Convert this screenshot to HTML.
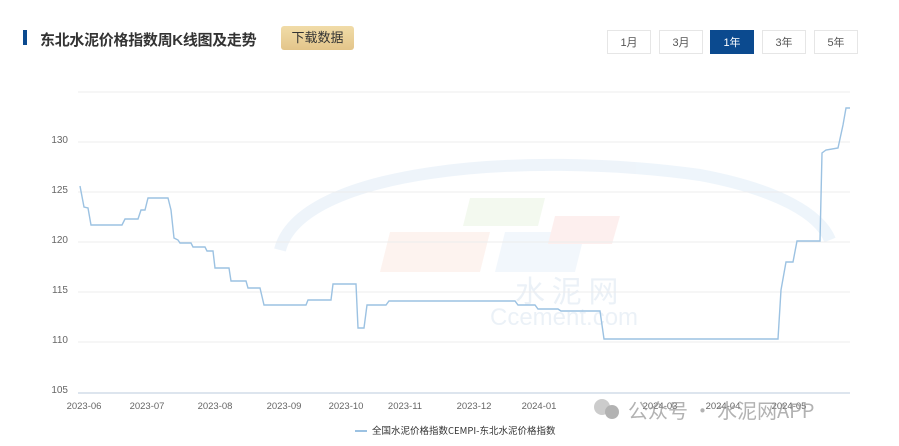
<!DOCTYPE html><html><head><meta charset="utf-8"><style>
body{margin:0;width:899px;height:446px;background:#fff;font-family:"Liberation Sans","Noto Sans CJK SC",sans-serif;position:relative;overflow:hidden}
.t{position:absolute;left:40px;top:29px;font-size:15px;font-weight:bold;color:#333;letter-spacing:-0.3px}
.bar{position:absolute;left:23px;top:30px;width:4px;height:15px;background:#0b4a8f}
.dl{position:absolute;left:281px;top:26px;width:73px;height:24px;border-radius:3px;background:linear-gradient(#f1dca8,#e3c58a);font-size:13px;color:#333;text-align:center;line-height:24px}
.b{position:absolute;top:30px;width:44px;height:24px;border:1px solid #e6e6e6;font-size:11px;color:#555;text-align:center;line-height:24px;box-sizing:border-box}
.on{background:#0b4a8f;color:#fff;border-color:#0b4a8f}
</style></head><body>
<div class="bar"></div><div class="t">东北水泥价格指数周K线图及走势</div><div class="dl">下载数据</div>
<div class="b" style="left:607px">1月</div><div class="b" style="left:659px">3月</div><div class="b on" style="left:710px">1年</div><div class="b" style="left:762px">3年</div><div class="b" style="left:814px">5年</div>
<svg width="899" height="446" style="position:absolute;left:0;top:0" font-family="Liberation Sans,sans-serif">
<g opacity="0.13">
<path d="M280,250 C300,170 520,150 700,175 C780,190 820,215 830,240" fill="none" stroke="#7fb0e0" stroke-width="12"/>
<polygon points="390,232 490,232 480,272 380,272" fill="#f4a58a"/>
<polygon points="505,232 585,232 575,272 495,272" fill="#9ec6ea"/>
<polygon points="470,198 545,198 538,226 463,226" fill="#a6d38c"/>
<polygon points="555,216 620,216 612,244 548,244" fill="#f08a86"/>
<text x="515" y="302" font-size="30" fill="#6f9cc8" font-family="Noto Sans CJK SC">水 泥 网</text>
<text x="490" y="325" font-size="24" fill="#6f9cc8">Ccement.com</text>
</g>
<g stroke="#ececec" stroke-width="1">
<line x1="78" y1="92" x2="850" y2="92"/><line x1="78" y1="142" x2="850" y2="142"/><line x1="78" y1="192" x2="850" y2="192"/><line x1="78" y1="242" x2="850" y2="242"/><line x1="78" y1="292" x2="850" y2="292"/><line x1="78" y1="342" x2="850" y2="342"/>
</g>
<line x1="78" y1="393" x2="850" y2="393" stroke="#dde5ee" stroke-width="2"/>
<g font-size="10" fill="#666" text-anchor="end">
<text x="68" y="143">130</text><text x="68" y="193">125</text><text x="68" y="243">120</text><text x="68" y="293">115</text><text x="68" y="343">110</text><text x="68" y="393">105</text></g>
<g font-size="9.5" fill="#666" text-anchor="middle">
<text x="84" y="409">2023-06</text><text x="147" y="409">2023-07</text><text x="215" y="409">2023-08</text><text x="284" y="409">2023-09</text><text x="346" y="409">2023-10</text><text x="405" y="409">2023-11</text><text x="474" y="409">2023-12</text><text x="539" y="409">2024-01</text><text x="660" y="409">2024-03</text><text x="723" y="409">2024-04</text><text x="789" y="409">2024-05</text></g>
<polyline fill="none" stroke="#9cc2e2" stroke-width="1.4" points="80,186 84,207 88,208 91,225 122,225 125,219 138,219 141,210 145,210 148,198 168,198 171,210 174,238 178,240 180,243 191,243 193,247 205,247 207,251 213,251 215,268 229,268 231,281 246,281 248,288 260,288 264,305 306,305 308,300 331,300 333,284 356,284 358,328 364,328 367,305 386,305 389,301 515,301 518,305 535,305 538,309 558,309 561,311 600,311 604,339 778,339 781,290 786,262 793,262 797,241 820,241 822,153 826,150 838,148 843,125 846,108 850,108"/>
<line x1="355" y1="431" x2="367" y2="431" stroke="#9cc2e2" stroke-width="2"/>
<text x="372" y="434" font-size="9.5" fill="#333" font-family="Noto Sans CJK SC">全国水泥价格指数CEMPI-东北水泥价格指数</text>
<g opacity="0.75"><circle cx="602" cy="407" r="8" fill="#bbb"/><circle cx="612" cy="412" r="7" fill="#999"/>
<text x="628" y="418" font-size="20" fill="#999" font-family="Noto Sans CJK SC">公众号 · 水泥网APP</text></g>
</svg></body></html>
